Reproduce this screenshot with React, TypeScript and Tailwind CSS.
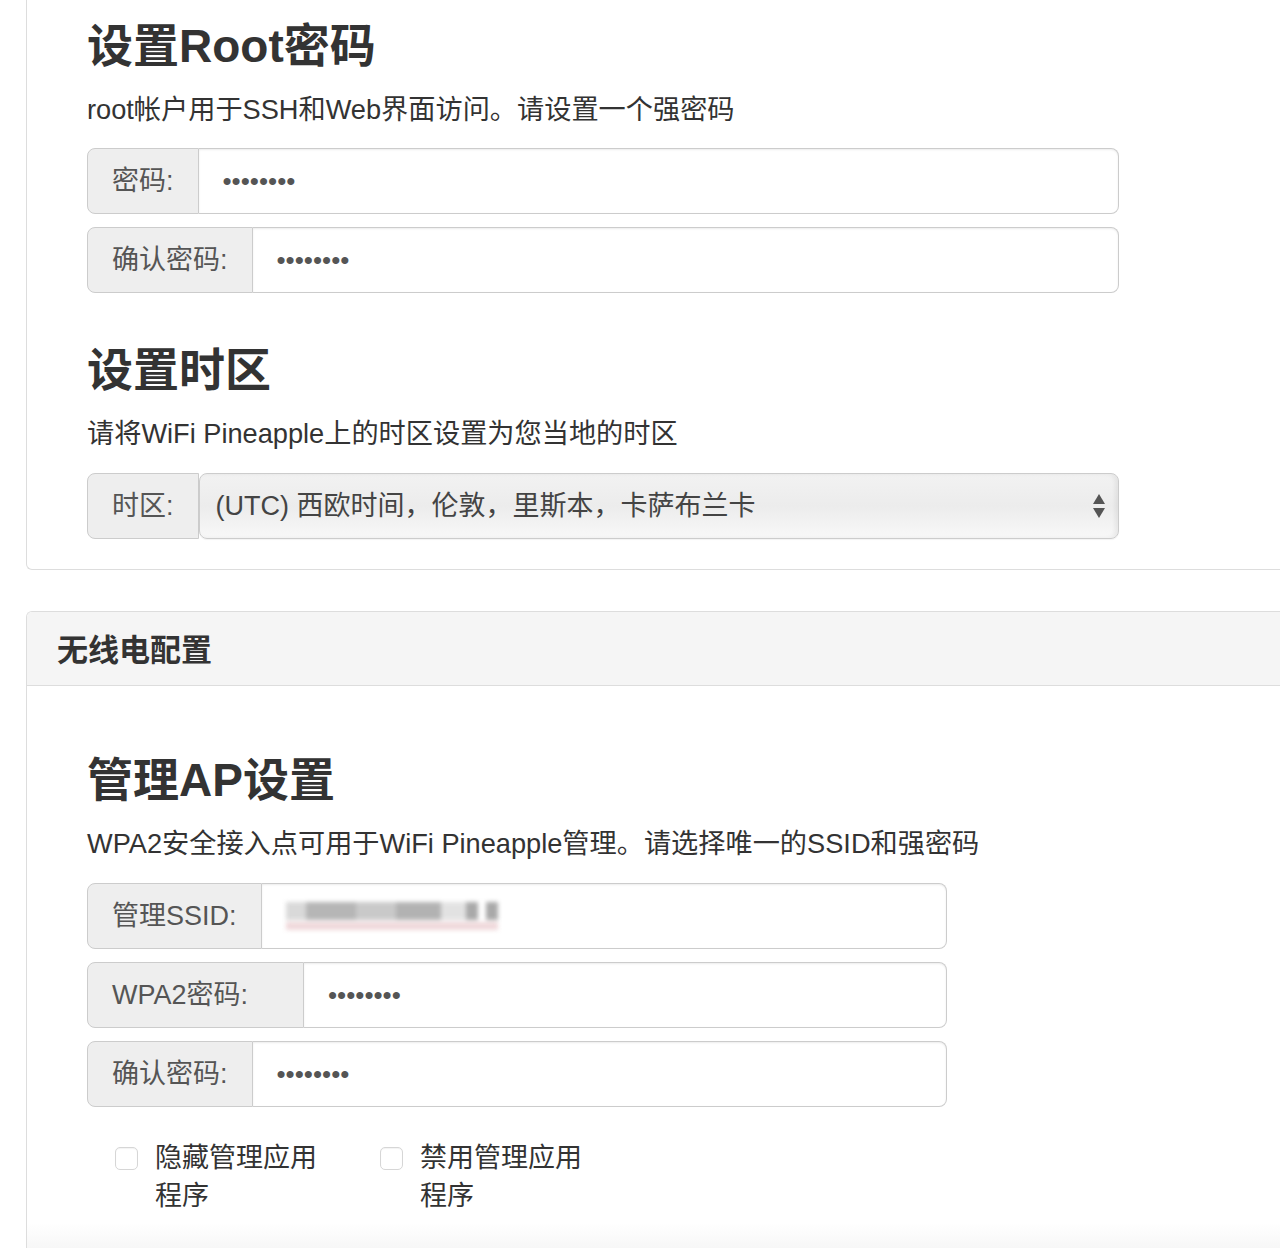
import React from 'react';

// input group: grey addon on the left, field on the right
interface GroupProps {
  label: string;
  width: string;
  labelWidth?: string;
  children: React.ReactNode;
}

const InputGroup: React.FC<GroupProps> = ({ label, width, labelWidth = '', children }) => {
  return (
    <div className={`flex h-[66px] ${width}`}>
      <div className={`flex items-center px-[24px] bg-[#eeeeee] border border-[#cccccc] rounded-l-[8px] text-[27px] text-[#555555] whitespace-nowrap ${labelWidth}`}>
        {label}
      </div>
      <div className="flex-1 flex items-center px-[24px] bg-white border border-l-0 border-[#cccccc] rounded-r-[8px] shadow-[inset_0_1px_2px_rgba(0,0,0,0.08)]">
        {children}
      </div>
    </div>
  );
};

const Dots: React.FC = () => (
  <span className="text-[26px] text-[#555555]">••••••••</span>
);

const Check: React.FC<{ text: string }> = ({ text }) => (
  <div className="flex items-start">
    <div className="mt-[8px] w-[23px] h-[23px] rounded-[5px] border border-[#d6d6d6] bg-white shadow-[inset_0_1px_1px_rgba(0,0,0,0.05)]" />
    <div className="ml-[17px] w-[175px] text-[27px] leading-[38px] text-[#333333]">{text}</div>
  </div>
);

const App: React.FC = () => {
  return (
    <div className="h-[1248px] overflow-hidden bg-white pl-[26px] font-['Liberation_Sans','Noto_Sans_CJK_SC',sans-serif] text-[#333333]">
      {/* Panel 1 (top cut off) */}
      <div className="border border-t-0 border-r-0 border-[#dddddd] rounded-bl-[6px] pl-[60px] pt-[20px] pb-[30px]">
        <h3 className="text-[46px] leading-[53px] font-bold text-[#333333]">设置Root密码</h3>
        <p className="mt-[17px] text-[27.2px] leading-[40px]">root帐户用于SSH和Web界面访问。请设置一个强密码</p>

        <div className="mt-[18px] flex flex-col gap-[13px]">
          <InputGroup label="密码:" width="w-[1032px]">
            <Dots />
          </InputGroup>
          <InputGroup label="确认密码:" width="w-[1032px]">
            <Dots />
          </InputGroup>
        </div>

        <h3 className="mt-[51px] text-[46px] leading-[53px] font-bold text-[#333333]">设置时区</h3>
        <p className="mt-[17px] text-[27.2px] leading-[40px]">请将WiFi Pineapple上的时区设置为您当地的时区</p>

        <div className="mt-[19px] flex h-[66px] w-[1032px]">
          <div className="flex items-center px-[24px] bg-[#eeeeee] border border-[#cccccc] rounded-l-[8px] text-[27px] text-[#555555]">
            时区:
          </div>
          <div className="flex-1 flex items-center justify-between pl-[16px] pr-[12px] border border-[#cccccc] rounded-[8px] bg-gradient-to-b from-[#f2f2f2] via-[#ececec] to-[#f8f8f8] shadow-[inset_-3px_0_4px_rgba(0,0,0,0.06),0_1px_1px_rgba(0,0,0,0.05)]">
            <span className="text-[27px] text-[#444444]">(UTC) 西欧时间，伦敦，里斯本，卡萨布兰卡</span>
            <svg width="14" height="26" viewBox="0 0 14 26" className="text-[#555555]">
              <path d="M7 1 L13 11 L1 11 Z" fill="currentColor" />
              <path d="M1 15 L13 15 L7 25 Z" fill="currentColor" />
            </svg>
          </div>
        </div>
      </div>

      {/* Panel 2 */}
      <div className="mt-[41px] border border-r-0 border-b-0 border-[#dddddd] rounded-tl-[6px] overflow-hidden">
        <div className="h-[74px] flex items-center pl-[30px] pt-[5px] bg-[#f5f5f5] border-b border-[#dddddd]">
          <span className="text-[31px] font-bold text-[#333333]">无线电配置</span>
        </div>

        <div className="pl-[60px] pt-[68px]">
          <h3 className="text-[46px] leading-[53px] font-bold text-[#333333]">管理AP设置</h3>
          <p className="mt-[17px] text-[27.2px] leading-[40px]">WPA2安全接入点可用于WiFi Pineapple管理。请选择唯一的SSID和强密码</p>

          <div className="mt-[19px] flex flex-col gap-[13px]">
            <InputGroup label="管理SSID:" width="w-[860px]">
              <div className="flex flex-col gap-[2px] blur-[2px] opacity-80">
                <div className="flex h-[18px] w-[215px]">
                  <div className="w-[20px] bg-[#d0d0d0]" />
                  <div className="w-[50px] bg-[#a4a4a4]" />
                  <div className="w-[40px] bg-[#bcbcbc]" />
                  <div className="w-[45px] bg-[#a0a0a0]" />
                  <div className="w-[25px] bg-[#dcdcdc]" />
                  <div className="w-[12px] bg-[#949494]" />
                  <div className="w-[8px] bg-white" />
                  <div className="w-[12px] bg-[#949494]" />
                </div>
                <div className="h-[8px] w-[212px] bg-[#eccfd2]" />
              </div>
            </InputGroup>
            <InputGroup label="WPA2密码:" width="w-[860px]" labelWidth="w-[217px]">
              <Dots />
            </InputGroup>
            <InputGroup label="确认密码:" width="w-[860px]">
              <Dots />
            </InputGroup>
          </div>

          <div className="mt-[32px] ml-[28px] flex gap-[50px]">
            <Check text="隐藏管理应用程序" />
            <Check text="禁用管理应用程序" />
          </div>
        </div>

        <div className="mt-[8px] h-[40px] bg-gradient-to-b from-white to-[#f2f2f2]" />
      </div>
    </div>
  );
};

export default App;
